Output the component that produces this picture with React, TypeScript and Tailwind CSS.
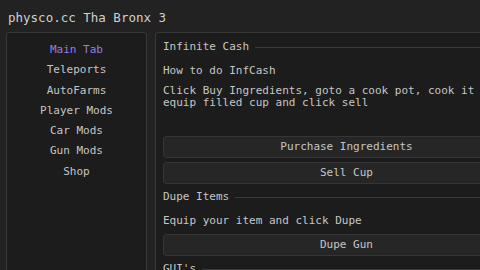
import React from 'react';

const tabs = ['Main Tab', 'Teleports', 'AutoFarms', 'Player Mods', 'Car Mods', 'Gun Mods', 'Shop'];

function Section({ title, className }: { title: string; className?: string }) {
  return (
    <div className={`flex items-center gap-[6px] h-[12px] ${className ?? ''}`}>
      <span className="whitespace-nowrap">{title}</span>
      <div className="h-px flex-1 bg-[#3a3a3a]" />
    </div>
  );
}

function Button({ label, className }: { label: string; className?: string }) {
  return (
    <div
      className={`h-[22px] w-full flex items-center justify-center rounded-[3px] border border-[#353535] bg-[#262626] ${className ?? ''}`}
    >
      {label}
    </div>
  );
}

export default function App() {
  return (
    <div
      className="w-[480px] h-[270px] overflow-hidden bg-[#222222] text-[#c6c6c6]"
      style={{ fontFamily: '"DejaVu Sans Mono", monospace' }}
    >
      {/* Title bar */}
      <div className="h-[32px] flex items-center px-[8px] pt-[2px] text-[12.5px] text-[#d0d0d0] leading-[15px]">
        physco.cc Tha Bronx 3
      </div>

      <div className="flex gap-[8px] pl-[6px] text-[11px] leading-[12px]">
        {/* Sidebar */}
        <div className="w-[141px] shrink-0 h-[260px] rounded-[3px] border border-[#383838] bg-[#1c1c1c] pt-[7px] flex flex-col items-center">
          {tabs.map((t, i) => (
            <div
              key={t}
              className={`leading-[20.3px] ${i === 0 ? 'text-[#9a7be6]' : 'text-[#c6c6c6]'}`}
            >
              {t}
            </div>
          ))}
        </div>

        {/* Content */}
        <div className="w-[383px] shrink-0 h-[260px] rounded-[3px] border border-[#383838] bg-[#1c1c1c] px-[7px] pt-[8px] flex flex-col">
          <Section title="Infinite Cash" />
          <div className="mt-[12px]">How to do InfCash</div>
          <div className="mt-[8px] whitespace-nowrap">
            Click Buy Ingredients, goto a cook pot, cook it
          </div>
          <div className="whitespace-nowrap">equip filled cup and click sell</div>
          <Button label="Purchase Ingredients" className="mt-[27px]" />
          <Button label="Sell Cup" className="mt-[4px]" />
          <Section title="Dupe Items" className="mt-[7px]" />
          <div className="mt-[12px]">Equip your item and click Dupe</div>
          <Button label="Dupe Gun" className="mt-[7px]" />
          <Section title="GUI's" className="mt-[7px]" />
        </div>
      </div>
    </div>
  );
}
